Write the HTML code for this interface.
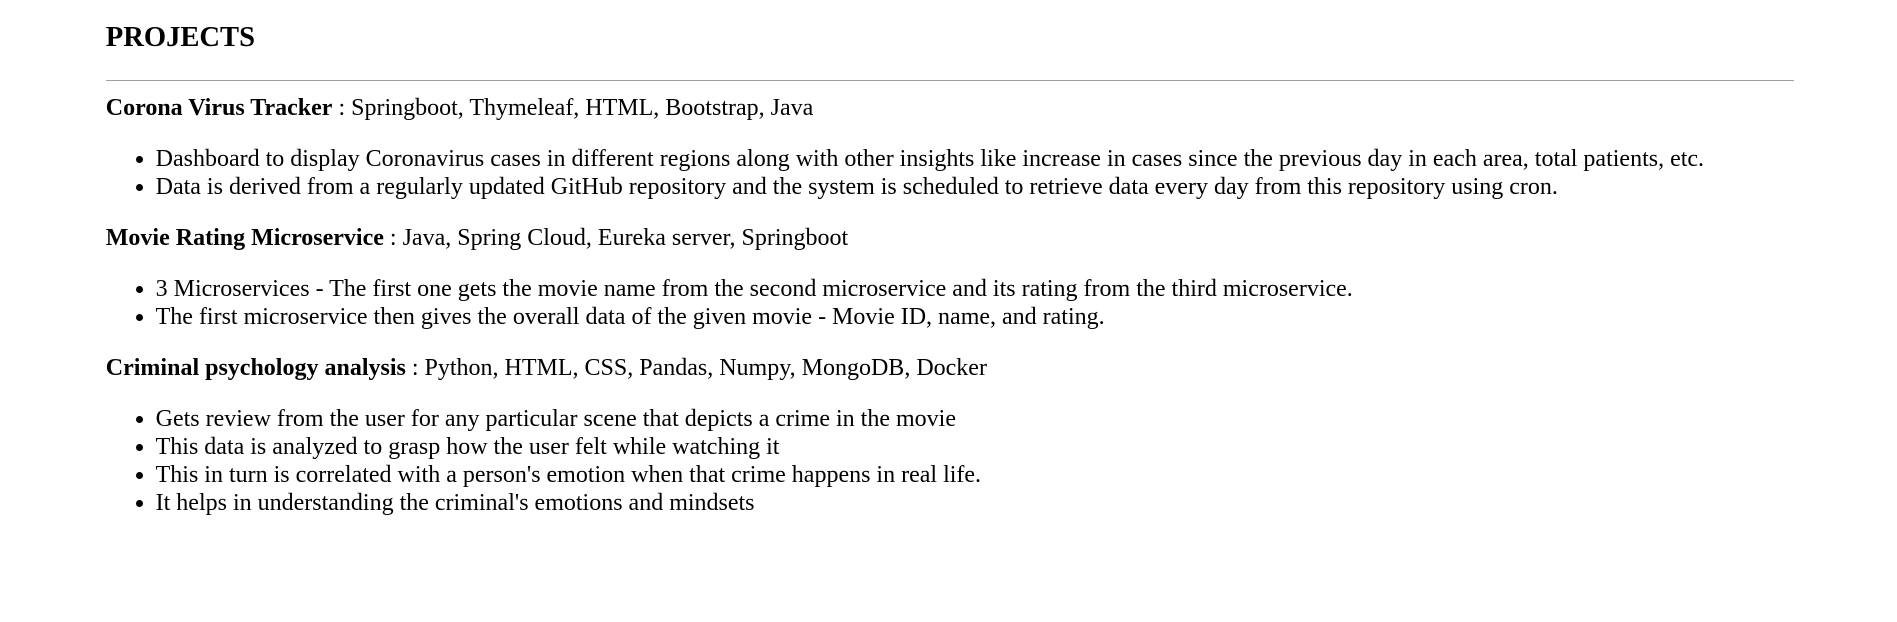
<!DOCTYPE html>
<html><head><meta charset="utf-8"><style>
html,body{margin:0;padding:0;background:#fff;}
body{zoom:1.216;width:1560px;height:511px;overflow:hidden;font-family:"Liberation Serif","Times New Roman",serif;color:#000;font-size:19.75px;line-height:23px;}
.wrap{position:relative;padding-left:87px;width:1388px;}
h2{font-size:23.5px;line-height:28px;margin:0;padding-top:17px;font-weight:bold;}
hr{border:0;border-top:1px solid #a0a0a0;height:0;margin:21px 0 11px 0;}
p{margin:0 0 19px 0;}
ul{margin:0 0 19px 0;padding-left:41px;}
li{margin:0;}
</style></head><body><div class="wrap">
<h2>PROJECTS</h2>
<hr>
<p><b>Corona Virus Tracker</b> : Springboot, Thymeleaf, HTML, Bootstrap, Java</p>
<ul>
<li>Dashboard to display Coronavirus cases in different regions along with other insights like increase in cases since the previous day in each area, total patients, etc.</li>
<li>Data is derived from a regularly updated GitHub repository and the system is scheduled to retrieve data every day from this repository using cron.</li>
</ul>
<p><b>Movie Rating Microservice</b> : Java, Spring Cloud, Eureka server, Springboot</p>
<ul>
<li>3 Microservices - The first one gets the movie name from the second microservice and its rating from the third microservice.</li>
<li>The first microservice then gives the overall data of the given movie - Movie ID, name, and rating.</li>
</ul>
<p><b>Criminal psychology analysis</b> : Python, HTML, CSS, Pandas, Numpy, MongoDB, Docker</p>
<ul>
<li>Gets review from the user for any particular scene that depicts a crime in the movie</li>
<li>This data is analyzed to grasp how the user felt while watching it</li>
<li>This in turn is correlated with a person's emotion when that crime happens in real life.</li>
<li>It helps in understanding the criminal's emotions and mindsets</li>
</ul>
</div></body></html>
